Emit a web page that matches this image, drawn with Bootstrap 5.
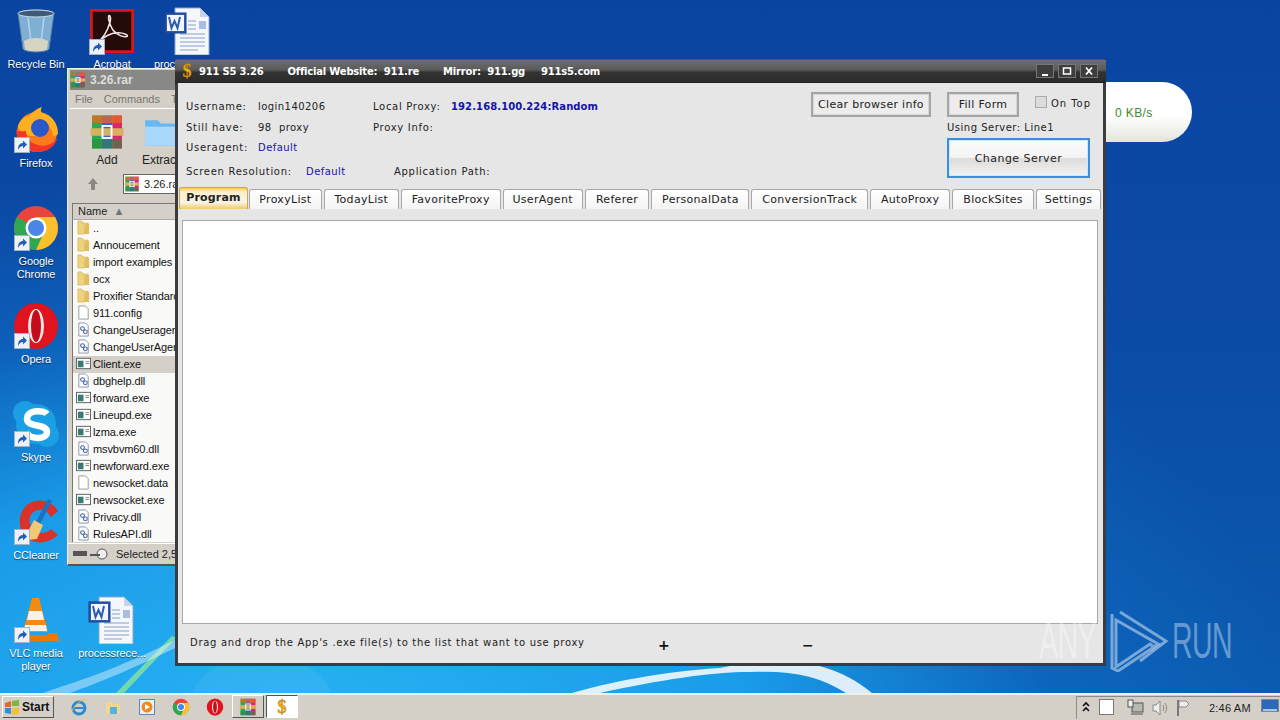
<!DOCTYPE html>
<html>

<head>
  <title>911 S5 3.26</title>
  <link href="https://cdn.jsdelivr.net/npm/bootstrap@5.3.2/dist/css/bootstrap.min.css" rel="stylesheet" type="text/css" />
  <script src="https://cdn.jsdelivr.net/npm/bootstrap@5.3.2/dist/js/bootstrap.bundle.min.js"></script>
  <style>
    html, body { height: 100%; }
    body { margin: 0; width: 1280px; height: 720px; overflow: hidden; font-family: "Liberation Sans", sans-serif; font-size: 11px; position: relative;
      background: radial-gradient(ellipse 1000px 560px at 300px 730px, #28b2f4 0%, #1a9ce8 45%, rgba(14,110,200,.55) 75%, rgba(10,70,166,0) 100%),
        linear-gradient(180deg, #0a44a2 0%, #0b4ca6 50%, #0b5cb0 100%); }
    .wall { position: absolute; left: 0; top: 0; width: 1280px; height: 693px; }

    /* desktop icons */
    .dsk { position: absolute; width: 72px; text-align: center; color: #fff; font-size: 11px; line-height: 13px; letter-spacing: -.1px; text-shadow: 0 1px 1px rgba(0,0,0,.6); }
    .dsk svg { display: block; margin: 0 auto 3px; width: 48px; height: 48px; }
    .dsk-small svg { width: 44px; margin-bottom: 3px; }
    .dsk-left span { display: block; text-align: left; padding-left: 2px; }

    /* winrar window */
    .rar { position: absolute; left: 67px; top: 68px; width: 110px; height: 498px; background: #d4d0c8; border: 1px solid #f2f0ec; border-right: 0; border-bottom: 2px solid #55534f; overflow: hidden; color: #222; }
    .rar-title { height: 20px; margin: 1px 2px 0; background: #888885; color: #ddd; font-weight: 700; font-size: 12px; line-height: 20px; white-space: nowrap; }
    .rar-menu { height: 18px; line-height: 18px; padding-left: 7px; color: #77756f; font-size: 11px; white-space: nowrap; gap: 11px; }
    .rar-tools { height: 63px; margin: 0 2px; border-top: 1px solid #fff; white-space: nowrap; font-size: 12px; line-height: 13px; }
    .rar-tools svg { display: block; margin: 0 auto 3px; }
    .tool-add { margin-left: 19px; }
    .tool-ext { margin-left: 17px; }
    .rar-addr { height: 25px; margin-left: 2px; padding-left: 16px; gap: 23px; }
    .rar-box { width: 60px; height: 20px; background: #fff; border: 1px solid #666; font-size: 11px; line-height: 18px; white-space: nowrap; overflow: hidden; }
    .rar-head { height: 17px; margin: 7px 0 0 4px; background: #d4d0c8; border: 1px solid #777; border-bottom-color: #aaa; font-size: 11px; line-height: 15px; padding-left: 5px; }
    .rar-list { height: 322px; margin-left: 4px; background: #f9f9f7; overflow: hidden; border-left: 1px solid #777; }
    .rar-row { height: 17px; line-height: 17px; font-size: 11px; letter-spacing: -.1px; white-space: nowrap; padding-left: 3px; color: #111; }
    .rar-row.sel { background: #d4d0c8; }
    .rar-row svg { width: 15px; height: 15px; vertical-align: -3px; margin-right: 2px; }
    .rar-status { height: 21px; margin-top: 1px; border-top: 1px solid #fff; line-height: 20px; white-space: nowrap; font-size: 11px; }

    /* speed pill behind main window */
    .speed { position: absolute; left: 1100px; top: 82px; width: 92px; height: 60px; background: linear-gradient(180deg, #fff 0%, #fff 55%, #e4e4de 100%); border-radius: 0 30px 30px 0; color: #3d8a2e; font-size: 12px; line-height: 62px; padding-left: 15px; letter-spacing: .4px; }

    /* main window */
    .app { position: absolute; left: 175px; top: 59px; width: 931px; height: 607px; background: #e6e6e6; border: 3px solid #3a3c40; border-top: 1px solid #555; font-family: "DejaVu Sans", sans-serif; font-size: 10px; color: #222; letter-spacing: .7px; }
    .app-title { height: 23px; background: linear-gradient(180deg, #6e6e6e 0%, #5a5a5a 45%, #333 55%, #2b2b2b 100%); color: #fff; font-weight: 700; font-size: 10px; line-height: 21px; white-space: nowrap; letter-spacing: -.2px; padding-left: 4px; border-bottom: 1px solid #222; margin: 0 -3px; }
    .winbtn { width: 18px; height: 14px; border: 1px solid #777; background: #3e3e3e; color: #fff; }
    .winbtn svg { display: block; width: 16px; height: 12px; }
    .info { height: 104px; padding: 17px 11px 0 8px; }
    .inf-row { line-height: 14px; white-space: nowrap; }
    .inf-r2 { margin-top: 7px; }
    .inf-r3 { margin-top: 6px; }
    .inf-r4 { margin-top: 10px; }
    .blue { color: #1414a8; letter-spacing: .45px; }
    b.blue { letter-spacing: .1px; }
    .lbl-a { display: inline-block; width: 72px; }
    .lbl-b { width: 115px; letter-spacing: .45px; }
    .lbl-c { width: 78px; }
    .lbl-d { width: 120px; }
    .lbl-e { width: 88px; }
    .btn-col { margin-top: -8px; }
    .old-btn { background: #ececec; border: 2px solid #a4a4a4; outline: 1px solid #d8d8d8; outline-offset: -3px; height: 25px; font-size: 11px; line-height: 21px; padding: 0; text-align: center; color: #222; white-space: nowrap; letter-spacing: .3px; }
    .btn-clear { width: 120px; }
    .btn-fill { width: 72px; }
    .srv-col { width: 145px; }
    .ontop { letter-spacing: .95px; }
    .usrv { margin-top: 4px; line-height: 14px; white-space: nowrap; letter-spacing: .5px; }
    .chg-btn { width: 143px; height: 40px; margin-top: 3px; border: 2px solid #3a8fdc; background: linear-gradient(180deg, #fbfbfb 0%, #f4f4f4 48%, #dcdcdc 52%, #f2f2f2 100%); outline: 1px solid #cfe8fb; outline-offset: -3px; font-size: 11px; line-height: 37px; text-align: center; letter-spacing: .45px; }
    .chk { width: 12px; height: 12px; background: #dcdcdc; border: 1px solid #aaa; }
    .tabbar { height: 23px; padding-left: 1px; align-items: flex-end; }
    .tabi { height: 20px; margin-right: 2px; margin-bottom: 1px; background: linear-gradient(180deg, #fff 0%, #f4f4f4 100%); border: 1px solid #a8a8a8; border-bottom: 0; border-radius: 3px 3px 0 0; font-size: 11px; line-height: 19px; text-align: center; white-space: nowrap; letter-spacing: .3px; }
    .tabi.on { height: 22px; margin-right: 1px; background: linear-gradient(180deg, #ffc94a 0%, #fbeeca 18%, #f8f3e4 70%, #f4c860 100%); border-color: #c8a850; font-weight: 700; letter-spacing: .2px; line-height: 19px; }
    .panel { width: 916px; height: 404px; margin: 10px 0 0 4px; background: #fff; border: 1px solid #a8a8a8; }
    .foot { height: 36px; padding-left: 12px; line-height: 38px; white-space: nowrap; position: relative; }
    .pm { position: absolute; top: 2px; font-weight: 700; font-size: 14px; color: #111; }

    /* watermark */
    .mark-any { position: absolute; left: 1039px; top: 610px; display: flex; align-items: center; color: rgba(255,255,255,.38); font-family: "Liberation Sans", sans-serif; font-size: 50px; line-height: 60px; letter-spacing: -1px; pointer-events: none; }
    .mark-any span { display: inline-block; transform: scaleX(.57); transform-origin: left center; width: 69px; }
    .mark-any svg { width: 62px; height: 62px; }
    .mark-any span.r { margin-left: 2px; }

    /* taskbar */
    .tbar { position: absolute; left: 0; top: 693px; width: 1280px; height: 27px; background: #d4d0c8; border-top: 2px solid #f2f0ea; }
    .startb { width: 52px; height: 22px; margin: 1px 0 0 2px; background: #d4d0c8; border: 1px solid #fff; border-right-color: #555; border-bottom-color: #555; font-weight: 700; font-size: 12px; line-height: 20px; color: #111; padding-left: 1px; gap: 2px; }
    .tk { width: 34px; text-align: center; }
    .tk svg { width: 18px; height: 18px; display: block; margin: 3px auto 0; }
    .tk-row { margin-left: 8px; }
    .tb-task { width: 32px; height: 23px; margin-right: 2px; border: 1px solid #fff; border-right-color: #555; border-bottom-color: #555; }
    .tb-task.act { background: #fff; border-color: #555 #fff #fff #555; }
    .tb-task svg { display: block; width: 18px; height: 18px; margin: 2px auto 0; }
    .tray { position: absolute; right: 0; top: 1px; width: 204px; height: 23px; border-left: 1px solid #8c8a84; border-top: 1px solid #8c8a84; font-size: 11px; color: #222; }
    .tray svg { position: absolute; top: 2px; }
    .t1 { left: 3px; }
    .t2 { left: 22px; }
    .t3 { left: 50px; }
    .t4 { left: 74px; }
    .t5 { left: 98px; }
    .t6 { left: 184px; }
    .clock { position: absolute; left: 132px; top: 0; line-height: 23px; letter-spacing: .2px; }

    .d1 { left: 0; top: 7px; } .d2 { left: 76px; top: 7px; } .d3 { left: 152px; top: 7px; }
    .d4 { left: 0; top: 106px; } .d5 { left: 0; top: 204px; } .d6 { left: 0; top: 302px; }
    .d7 { left: 0; top: 400px; } .d8 { left: 0; top: 498px; } .d9 { left: 0; top: 596px; }
    .d10 { left: 76px; top: 596px; }
  </style>
</head>

<body>
  <svg width="0" height="0" class="position-absolute">
    <defs>
      <symbol id="sc" viewBox="0 0 16 16">
        <rect x=".5" y=".5" width="15" height="15" fill="#eef2f6" stroke="#9fb4c8" />
        <path d="M4 13c0-5 2-7 5-7V3.500l4 4-4 4V9c-2 0-3.500 1-5 4z" fill="#1f5fc0" />
      </symbol>
      <symbol id="word" viewBox="0 0 48 48">
        <path d="M11 1h25l9 9v38H11z" fill="#f4f7fc" stroke="#8ea6cc" />
        <path d="M36 1v9h9z" fill="#c6d4ea" />
        <path d="M24 14h8M24 18h8M24 22h8M16 27h25M16 31h25M16 35h25M16 39h25M16 43h18" stroke="#8aa0c8" stroke-width="1.200" />
        <rect x="35" y="14" width="7" height="8" fill="#a9bfdf" />
        <rect x="1" y="6" width="21" height="20" fill="#2a5cb4" stroke="#1a3f88" />
        <rect x="3" y="8" width="17" height="16" fill="#f3f6fc" />
        <path d="M5 10l2.500 11 3-7 3 7L16 10" fill="none" stroke="#2a5cb4" stroke-width="2" />
      </symbol>
      <symbol id="bin" viewBox="0 0 48 48">
        <path d="M6 6c4-4 32-4 36 0l-5 36c-2 4-24 4-26 0z" fill="#7fb0d4" stroke="#5e7c96" />
        <ellipse cx="24" cy="6.500" rx="18" ry="3.500" fill="#3f5a72" stroke="#c8dcec" />
        <path d="M12 34c6-4 18-4 24 0l-1 8c-2 3-20 3-22 0z" fill="#d8d4c2" />
        <path d="M16 11l3 24M32 11l-3 24" stroke="#b8d4e8" stroke-width="1.500" />
      </symbol>
      <symbol id="acro" viewBox="0 0 48 48">
        <rect x="1.500" y="1.500" width="45" height="45" fill="#250a0a" stroke="#d21a1a" stroke-width="3" />
        <path d="M8 36c6-3 11-12 14-22 1-4 0-7-1-7-2 0 0 10 4 16 4 5 11 8 15 7 3-1-3-4-9-4-8 0-16 4-20 9z" fill="none" stroke="#f2e4e4" stroke-width="1.700" />
      </symbol>
      <symbol id="ffx" viewBox="0 0 48 48">
        <circle cx="25" cy="26" r="20" fill="#ff7a1a" />
        <path d="M6 20c3-7 7-10 11-10 3-4 9-8 13-9-2 4-1 5 1 6 8 2 15 10 15 20 0 2-3 4-5 2-1-9-8-13-15-11-3 1-6 3-6 6 0 1 5 1 6 3s-4 4-7 3c-3 0-5-2-8-4-2-2-5-2-5-6z" fill="#ffb020" />
        <circle cx="28" cy="22" r="9" fill="#2a58c8" />
        <path d="M4 24c1 14 11 22 22 22 9 0 17-5 20-15-5 8-14 10-20 8-9-2-12-9-12-14-4 1-8 0-10-1z" fill="#f6352a" />
      </symbol>
      <symbol id="chr" viewBox="0 0 48 48">
        <circle cx="24" cy="24" r="22" fill="#e8453c" />
        <path d="M24 24L5 13A22 22 0 0 0 24 46l11-11z" fill="#2fa84f" />
        <path d="M24 13h19A22 22 0 0 1 24 46l9-20z" fill="#fbc02d" />
        <circle cx="24" cy="24" r="10.500" fill="#fff" />
        <circle cx="24" cy="24" r="8" fill="#4a86e8" />
      </symbol>
      <symbol id="oper" viewBox="0 0 48 48">
        <ellipse cx="24" cy="24" rx="22" ry="23" fill="#e0131f" />
        <ellipse cx="24" cy="24" rx="8" ry="17" fill="#f6e8e8" />
        <ellipse cx="24" cy="24" rx="5" ry="16" fill="#c40d18" />
      </symbol>
      <symbol id="skp" viewBox="0 0 48 48">
        <circle cx="13" cy="13" r="12" fill="#1a9ee4" />
        <circle cx="35" cy="35" r="12" fill="#1a9ee4" />
        <circle cx="24" cy="24" r="20" fill="#1a9ee4" />
        <path d="M35 14c-3-4-20-5-20 5 0 9 20 4 20 13 0 8-17 8-21 0" fill="none" stroke="#fff" stroke-width="6.500" />
      </symbol>
      <symbol id="ccl" viewBox="0 0 48 48">
        <path d="M46 13C40 3 28 0 18 5 7 11 5 26 11 36c7 10 23 12 35 1l-7-6c-6 6-15 5-19-1-5-7-2-14 3-17 6-3 12-1 16 6z" fill="#d8332a" />
        <path d="M36 1L24 24l4 2L40 3z" fill="#1d6fc4" />
        <path d="M22 22l9 5-6 14-19 2c7-3 12-13 16-21z" fill="#f0c878" />
      </symbol>
      <symbol id="vlc" viewBox="0 0 48 48">
        <path d="M20 2h7l9 34H11z" fill="#f58a10" />
        <path d="M17 15h13l2 9H15zM13 29h21l1 6H12z" fill="#f4f2ee" />
        <path d="M3 37h9l-1 2h25l-1-2h10l2 8H2z" fill="#e87a08" />
      </symbol>
      <symbol id="fold" viewBox="0 0 16 16">
        <path d="M2 1h4l1 2h2v12H2z" fill="#efd27c" stroke="#c9a84e" stroke-width=".6" />
        <path d="M10 3h3l1 2v10h-5z" fill="#e2bd5a" />
      </symbol>
      <symbol id="page" viewBox="0 0 16 16">
        <path d="M3 1h7l3 3v11H3z" fill="#fff" stroke="#9a9a9a" />
      </symbol>
      <symbol id="dll" viewBox="0 0 16 16">
        <path d="M3 1h7l3 3v11H3z" fill="#fff" stroke="#8a94a8" />
        <circle cx="7" cy="7" r="2" fill="none" stroke="#4a6aa8" stroke-width="1.200" />
        <circle cx="10" cy="10.500" r="2" fill="none" stroke="#4a6aa8" stroke-width="1.200" />
      </symbol>
      <symbol id="exe" viewBox="0 0 16 16">
        <rect x=".5" y="2.500" width="15" height="11" fill="#fff" stroke="#55606a" />
        <rect x="2" y="5" width="6" height="7" fill="#3a7a70" />
        <path d="M10 6h4M10 8h4" stroke="#888" />
      </symbol>
      <symbol id="rarb" viewBox="0 0 48 48">
        <rect x="4" y="2" width="13" height="44" fill="#2aa84a" />
        <rect x="17" y="2" width="14" height="44" fill="#3a62c8" />
        <rect x="31" y="2" width="13" height="44" fill="#d82a6a" />
        <rect x="4" y="2" width="40" height="10" fill="#e86a20" opacity=".75" />
        <rect x="4" y="34" width="40" height="12" fill="#2a8a3a" opacity=".6" />
        <rect x="2" y="19" width="44" height="10" fill="#d8b060" />
        <rect x="18" y="16" width="12" height="16" fill="none" stroke="#fff" stroke-width="2.500" />
      </symbol>
      <symbol id="dlr" viewBox="0 0 16 18">
        <text x="8" y="15" text-anchor="middle" font-family="Liberation Serif, serif" font-weight="700" font-size="18" fill="#f0b010" stroke="#a86a00" stroke-width=".4">$</text>
      </symbol>
    </defs>
  </svg>

  <svg class="wall" viewBox="0 0 1280 693">
    <ellipse cx="262" cy="700" rx="70" ry="44" fill="#fff" opacity=".06" />
    <path d="M872 693C820 650 760 660 720 668C660 672 610 682 572 693L600 693C660 680 710 672 750 672C790 670 820 676 846 693z" fill="#fff" opacity=".85" />
    <path d="M116 693L172 636 176 638 124 693z" fill="#8fe89a" opacity=".75" />
    <path d="M43 693C80 680 110 672 175 640L175 648C130 670 100 682 70 693z" fill="#fff" opacity=".4" />
  </svg>

  <div class="dsk d1"><svg><use href="#bin" /></svg><span>Recycle Bin</span></div>
  <div class="dsk dsk-small d2"><svg><use href="#acro" /></svg><span>Acrobat</span></div>
  <div class="dsk dsk-left d3"><svg><use href="#word" /></svg><span>proc</span></div>
  <div class="dsk d4"><svg><use href="#ffx" /></svg><span>Firefox</span></div>
  <div class="dsk d5"><svg><use href="#chr" /></svg><span>Google<br>Chrome</span></div>
  <div class="dsk d6"><svg><use href="#oper" /></svg><span>Opera</span></div>
  <div class="dsk d7"><svg><use href="#skp" /></svg><span>Skype</span></div>
  <div class="dsk d8"><svg><use href="#ccl" /></svg><span>CCleaner</span></div>
  <div class="dsk d9"><svg><use href="#vlc" /></svg><span>VLC media<br>player</span></div>
  <div class="dsk d10"><svg><use href="#word" /></svg><span>processrece...</span></div>
  <div id="shortcuts"></div>

  <div class="rar">
    <div class="rar-title d-flex align-items-center gap-1"><svg width="16" height="16"><use href="#rarb" /></svg>3.26.rar</div>
    <div class="rar-menu d-flex"><span>File</span><span>Commands</span><span>T</span></div>
    <div class="rar-tools d-flex pt-1">
      <div class="text-center tool-add"><svg width="36" height="38"><use href="#rarb" /></svg><div>Add</div></div>
      <div class="text-center tool-ext"><svg width="36" height="38" viewBox="0 0 34 34"><path d="M2 6h12l3 3h15v21H2z" fill="#6ab8f0" /><path d="M2 12h30v18H2z" fill="#a8d8fa" /></svg><div>Extract</div></div>
    </div>
    <div class="rar-addr d-flex align-items-center">
      <svg width="14" height="16" viewBox="0 0 14 16" class="flex-shrink-0"><path d="M7 2l5 6H9v6H5V8H2z" fill="#8a8880" /></svg>
      <div class="rar-box d-flex align-items-center gap-1 flex-shrink-0"><svg width="16" height="16" class="flex-shrink-0"><use href="#rarb" /></svg>3.26.rar</div>
    </div>
    <div class="rar-head">Name &nbsp;<span class="text-secondary">&#9650;</span></div>
    <div class="rar-list" id="rarList"></div>
    <div class="rar-status d-flex align-items-center gap-1 ps-1">
      <svg width="40" height="14" viewBox="0 0 40 14" class="flex-shrink-0"><rect x="1" y="4" width="14" height="5" fill="#555" /><circle cx="30" cy="7" r="5" fill="#eee" stroke="#555" /><path d="M18 8h10" stroke="#555" stroke-width="2" /></svg>
      <span>Selected 2,5</span>
    </div>
  </div>

  <div class="speed">0 KB/s</div>

  <div class="app">
    <div class="app-title d-flex align-items-center">
      <svg width="16" height="18" class="me-1 flex-shrink-0"><use href="#dlr" /></svg>
      <span>911 S5 3.26</span>
      <span class="ms-4">Official Website:&nbsp; 911.re</span>
      <span class="ms-4">Mirror:&nbsp; 911.gg</span>
      <span class="ms-3">911s5.com</span>
      <div class="ms-auto d-flex gap-1 me-2">
        <div class="winbtn"><svg viewBox="0 0 16 12"><path d="M5 9h6v2H5z" fill="#fff" /></svg></div>
        <div class="winbtn"><svg viewBox="0 0 16 12"><path d="M4.500 3h7v6h-7z" fill="none" stroke="#fff" stroke-width="1.500" /></svg></div>
        <div class="winbtn"><svg viewBox="0 0 16 12"><path d="M5 2.500l6 7M11 2.500l-6 7" stroke="#fff" stroke-width="1.800" /></svg></div>
      </div>
    </div>

    <div class="info d-flex">
      <div class="flex-grow-1">
        <div class="inf-row d-flex"><span class="lbl-a">Username:</span><span class="lbl-b">login140206</span><span class="lbl-c">Local Proxy:</span><b class="blue">192.168.100.224:Random</b></div>
        <div class="inf-row inf-r2 d-flex"><span class="lbl-a">Still have:</span><span class="lbl-b">98&nbsp; proxy</span><span>Proxy Info:</span></div>
        <div class="inf-row inf-r3 d-flex"><span class="lbl-a">Useragent:</span><span class="blue">Default</span></div>
        <div class="inf-row inf-r4 d-flex"><span class="lbl-d">Screen Resolution:</span><span class="blue lbl-e">Default</span><span>Application Path:</span></div>
      </div>
      <div class="d-flex gap-3 btn-col">
        <div class="old-btn btn-clear">Clear browser info</div>
        <div class="srv-col">
          <div class="d-flex align-items-start">
            <div class="old-btn btn-fill">Fill Form</div>
            <div class="chk ms-3 mt-1 flex-shrink-0"></div>
            <span class="ms-1 mt-1 ontop">On Top</span>
          </div>
          <div class="usrv">Using Server: Line1</div>
          <div class="chg-btn">Change Server</div>
        </div>
      </div>
    </div>

    <div class="tabbar d-flex" id="tabs"></div>
    <div class="panel"></div>
    <div class="foot">Drag and drop the App's .exe file(s) to the list that want to use proxy
      <span class="pm" id="plusBtn">+</span>
      <span class="pm" id="minusBtn">&minus;</span>
    </div>
  </div>

  <div class="mark-any">
    <span>ANY</span>
    <svg viewBox="0 0 62 62"><path d="M4 4v54l6 3 36-24-4-3-34 23V10l42 24-8 6" fill="none" stroke="rgba(255,255,255,.45)" stroke-width="3" /><path d="M12 2l46 29-26 20" fill="none" stroke="rgba(255,255,255,.45)" stroke-width="3" /></svg>
    <span class="r">RUN</span>
  </div>

  <div class="tbar d-flex">
    <div class="startb d-flex align-items-center">
      <svg width="16" height="15" viewBox="0 0 16 15" class="flex-shrink-0"><path d="M1 3l6-2v6H1z" fill="#e8642a" /><path d="M8 1l7-1v6H8z" fill="#7cb83c" /><path d="M1 8h6v6l-6-1z" fill="#3a8ad8" /><path d="M8 8h7v6l-7 1z" fill="#f2c230" /></svg>
      Start
    </div>
    <div class="d-flex tk-row">
      <div class="tk"><svg viewBox="0 0 18 18"><circle cx="9" cy="10" r="6" fill="none" stroke="#2a8ad8" stroke-width="3" /><path d="M4 10h10" stroke="#2a8ad8" stroke-width="2" /><path d="M2 13C5 6 12 1 16 2" stroke="#f2c230" fill="none" /></svg></div>
      <div class="tk"><svg viewBox="0 0 18 18"><path d="M2 4h6l1 2h7v10H2z" fill="#f0d890" /><rect x="6" y="9" width="7" height="7" fill="#5ab0e0" /></svg></div>
      <div class="tk"><svg viewBox="0 0 18 18"><rect x="1.500" y="1.500" width="15" height="15" fill="#e8f0f8" stroke="#5a88c0" /><circle cx="9" cy="9" r="5.500" fill="#f08a20" /><path d="M7 6l5 3-5 3z" fill="#fff" /></svg></div>
      <div class="tk"><svg><use href="#chr" /></svg></div>
      <div class="tk"><svg><use href="#oper" /></svg></div>
    </div>
    <div class="d-flex">
      <div class="tb-task"><svg><use href="#rarb" /></svg></div>
      <div class="tb-task act"><svg viewBox="0 0 16 18"><use href="#dlr" /></svg></div>
    </div>
    <div class="tray">
      <svg class="t1" width="12" height="16" viewBox="0 0 12 16"><path d="M3 7l3-3 3 3M3 12l3-3 3 3" fill="none" stroke="#111" stroke-width="1.600" /></svg>
      <svg class="t2" width="15" height="16"><rect x=".5" y=".5" width="14" height="15" fill="#fff" stroke="#777" /></svg>
      <svg class="t3" width="18" height="18" viewBox="0 0 18 18"><rect x="5" y="4" width="11" height="9" fill="#b8b8b0" stroke="#555" /><rect x="1" y="1" width="5" height="7" fill="#eee" stroke="#555" /><path d="M4 15h12" stroke="#555" /></svg>
      <svg class="t4" width="18" height="18" viewBox="0 0 18 18"><path d="M2 6h3l4-4v14l-4-4H2z" fill="#eee" stroke="#888" /><path d="M12 6c1 2 1 4 0 6M14 4c2 3 2 7 0 10" fill="none" stroke="#888" /></svg>
      <svg class="t5" width="18" height="18" viewBox="0 0 18 18"><path d="M3 1v16" stroke="#777" stroke-width="2" /><path d="M4 2h7l3 3-3 3H4z" fill="#eee" stroke="#888" /></svg>
      <span class="clock">2:46 AM</span>
      <svg class="t6" width="18" height="15" viewBox="0 0 18 15"><rect x=".5" y=".5" width="17" height="12" fill="#2a6ab8" stroke="#7a8a9a" /><rect x="2" y="10" width="14" height="2" fill="#a8c8e8" /></svg>
    </div>
  </div>

  <script>
    const tabs = [
      ['Program', 69], ['ProxyList', 73], ['TodayList', 75], ['FavoriteProxy', 100], ['UserAgent', 80], ['Referer', 65],
      ['PersonalData', 98], ['ConversionTrack', 117], ['AutoProxy', 80], ['BlockSites', 82], ['Settings', 65]
    ]
    const tabBar = document.querySelector('#tabs')
    tabs.forEach(function (t, i) {
      const el = document.createElement('div')
      el.className = i === 0 ? 'tabi on' : 'tabi'
      el.style.width = t[1] + 'px'
      el.textContent = t[0]
      tabBar.appendChild(el)
    })

    document.querySelector('#plusBtn').style.left = '480px'
    document.querySelector('#minusBtn').style.left = '624px'

    const files = [
      ['fold', '..'], ['fold', 'Annoucement'], ['fold', 'import examples'], ['fold', 'ocx'], ['fold', 'Proxifier Standard'],
      ['page', '911.config'], ['dll', 'ChangeUseragent'], ['dll', 'ChangeUserAgent'], ['exe', 'Client.exe'], ['dll', 'dbghelp.dll'],
      ['exe', 'forward.exe'], ['exe', 'Lineupd.exe'], ['exe', 'lzma.exe'], ['dll', 'msvbvm60.dll'], ['exe', 'newforward.exe'],
      ['page', 'newsocket.data'], ['exe', 'newsocket.exe'], ['dll', 'Privacy.dll'], ['dll', 'RulesAPI.dll']
    ]
    const rarList = document.querySelector('#rarList')
    files.forEach(function (f) {
      const row = document.createElement('div')
      row.className = f[1] === 'Client.exe' ? 'rar-row sel' : 'rar-row'
      row.innerHTML = '<svg><use href="#' + f[0] + '" /></svg>' + f[1]
      rarList.appendChild(row)
    })

    // little shortcut arrows on the desktop icons
    const arrows = [[89, 39], [14, 137], [14, 235], [14, 333], [14, 431], [14, 529], [14, 627]]
    const sc = document.querySelector('#shortcuts')
    arrows.forEach(function (a) {
      const s = document.createElementNS('http://www.w3.org/2000/svg', 'svg')
      s.setAttribute('class', 'position-absolute')
      s.setAttribute('width', 16)
      s.setAttribute('height', 16)
      s.style.left = a[0] + 'px'
      s.style.top = a[1] + 'px'
      s.innerHTML = '<use href="#sc" />'
      sc.appendChild(s)
    })
  </script>
</body>

</html>
